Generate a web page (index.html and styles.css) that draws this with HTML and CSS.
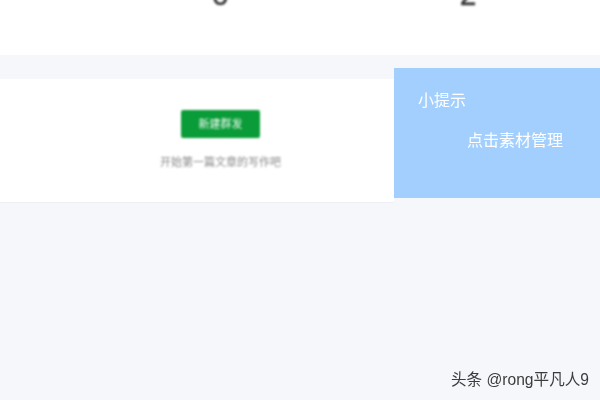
FILE: index.html
```html
<!DOCTYPE html>
<html lang="zh">
<head>
<meta charset="utf-8">
<title>新建群发</title>
<link rel="stylesheet" href="styles.css">
</head>
<body>
<div class="page">
  <section class="stats">
    <div class="stat">0</div>
    <div class="stat">2</div>
  </section>
  <section class="content">
    <div class="empty">
      <button class="btn" type="button">新建群发</button>
      <p class="hint">开始第一篇文章的写作吧</p>
    </div>
    <aside class="tip">
      <div class="tip-title">小提示</div>
      <div class="tip-body">点击素材管理</div>
    </aside>
  </section>
</div>
<div class="watermark">头条 @rong平凡人9</div>
</body>
</html>
```
FILE: styles.css
```css
* { box-sizing: border-box; }
html, body { margin: 0; height: 100%; overflow: hidden; }
body {
  background: #f6f7fb;
  font-family: "Liberation Sans", "Noto Sans CJK SC", sans-serif;
}
.stats {
  height: 55px;
  background: #fff;
  display: flex;
  align-items: flex-end;
  padding: 0 0 48px 212px;
  gap: 231px;
  overflow: hidden;
}
.stat {
  font-size: 30px;
  line-height: 30px;
  color: #333;
  -webkit-text-stroke: 0.4px #333;
  margin-bottom: -3px;
  filter: blur(0.8px);
}
.content {
  display: flex;
  align-items: flex-start;
  padding-top: 13px;
}
.empty {
  width: 394px;
  height: 124px;
  margin-top: 11px;
  background: #fff;
  border-bottom: 1px solid #eef0f5;
  display: flex;
  flex-direction: column;
  align-items: center;
  padding: 31px 0 0 47px;
}
.btn {
  width: 79px;
  height: 28px;
  border: 0;
  border-radius: 2px;
  background: #0a9c38;
  color: #f4fbf6;
  font: 11px/28px "Liberation Sans", "Noto Sans CJK SC", sans-serif;
  padding: 0;
  filter: blur(0.8px);
}
.hint {
  margin: 17px 0 0;
  font-size: 11px;
  line-height: 14px;
  color: #8a8a8a;
  filter: blur(0.8px);
}
.tip {
  flex: 1;
  height: 130px;
  background: #a3cfff;
  color: #fff;
  padding: 23px 24px 0;
}
.tip-title, .tip-body {
  font-size: 16px;
  line-height: 20px;
  filter: blur(0.6px);
}
.tip-body { margin: 20px 0 0 49px; }
.watermark {
  position: absolute;
  right: 11px;
  bottom: 10px;
  font-size: 15.6px;
  line-height: 20px;
  color: #3c3c3c;
  font-family: "Liberation Sans", "Noto Sans CJK SC", sans-serif;
  filter: blur(0.4px);
}
```
